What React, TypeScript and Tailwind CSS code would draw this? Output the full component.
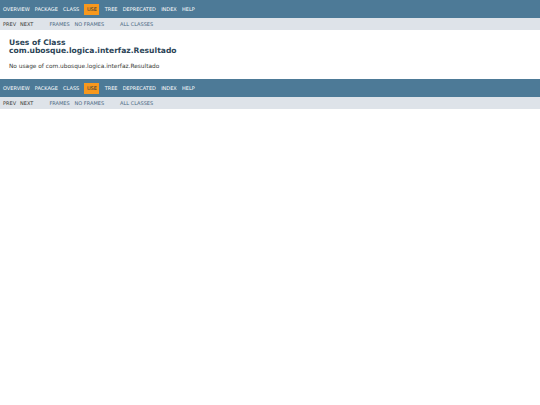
const navItems = ['OVERVIEW', 'PACKAGE', 'CLASS', 'USE', 'TREE', 'DEPRECATED', 'INDEX', 'HELP']

function TopNav() {
  return (
    <div className="flex h-[18px] items-center gap-[5.2px] bg-[#4d7a97] pl-[3px] text-[5px] leading-none text-white">
      {navItems.map((item) => (
        <span
          key={item}
          className={
            item === 'USE'
              ? 'flex h-[11px] items-center bg-[#f8981d] px-[2.5px] text-[#253441]'
              : ''
          }
        >
          {item}
        </span>
      ))}
    </div>
  )
}

function SubNav() {
  return (
    <div className="flex h-[12px] items-center bg-[#dee3e9] pl-[3px] text-[5px] leading-none text-[#353833]">
      <span>PREV</span>
      <span className="ml-[4px]">NEXT</span>
      <span className="ml-[16px] text-[#4a6782]">FRAMES</span>
      <span className="ml-[5px] text-[#4a6782]">NO FRAMES</span>
      <span className="ml-[16px] text-[#4a6782]">ALL CLASSES</span>
    </div>
  )
}

export default function App() {
  return (
    <div className="h-[405px] w-[540px] bg-white font-['DejaVu_Sans',sans-serif]">
      <TopNav />
      <SubNav />
      <div className="px-[9px] pt-[8.5px] pb-[9.2px]">
        <h2 className="text-[7.6px] font-bold leading-[8px] text-[#2c4557]">
          Uses of Class
          <br />
          com.ubosque.logica.interfaz.Resultado
        </h2>
        <p className="mt-[8.5px] text-[5.85px] leading-[7px] text-[#353833]">
          No usage of com.ubosque.logica.interfaz.Resultado
        </p>
      </div>
      <TopNav />
      <SubNav />
    </div>
  )
}
